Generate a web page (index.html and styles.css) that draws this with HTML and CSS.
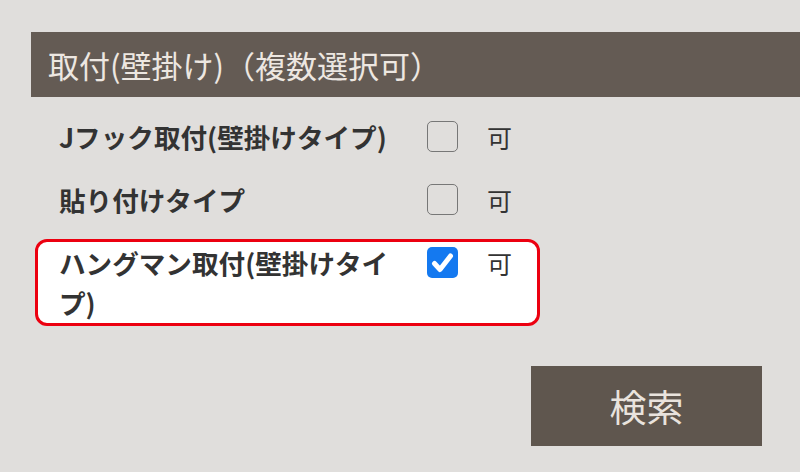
FILE: index.html
```html
<!DOCTYPE html>
<html lang="ja">
<head>
<meta charset="utf-8">
<title>取付(壁掛け)</title>
<link rel="stylesheet" href="styles.css">
</head>
<body>
<div class="panel">
  <div class="heading">取付(壁掛け)（複数選択可）</div>
  <div class="options">
    <div class="opt">
      <div class="label">Jフック取付(壁掛けタイプ)</div>
      <span class="box"></span>
      <span class="ok">可</span>
    </div>
    <div class="opt">
      <div class="label">貼り付けタイプ</div>
      <span class="box"></span>
      <span class="ok">可</span>
    </div>
    <div class="opt selected">
      <div class="label">ハングマン取付(壁掛けタイプ)</div>
      <span class="box checked"><svg viewBox="0 0 31 31" width="31" height="31"><path d="M7.5 16.5 L13 22.5 L23.5 9" fill="none" stroke="#fff" stroke-width="5" stroke-linecap="round" stroke-linejoin="round"/></svg></span>
      <span class="ok">可</span>
    </div>
  </div>
  <div class="actions">
    <button class="search" type="button">検索</button>
  </div>
</div>
</body>
</html>
```
FILE: styles.css
```css
html, body {
  margin: 0;
  padding: 0;
}
body {
  background: #e0dedc;
  font-family: "Noto Sans CJK JP", "Noto Sans", sans-serif;
  color: #333;
  width: 800px;
  height: 472px;
  overflow: hidden;
}
.panel {
  padding: 32px 0 0 31px;
}
.heading {
  height: 65px;
  background: #645b54;
  color: #ede7e1;
  font-size: 31px;
  line-height: 65px;
  padding-left: 17px;
  white-space: nowrap;
}
.options {
  margin: 16px 0 0 4px;
  width: 505px;
  display: flex;
  flex-direction: column;
  gap: 16px;
}
.opt {
  display: flex;
  align-items: flex-start;
  padding: 1px 22px 0 21px;
  border: 3px solid transparent;
  border-radius: 12px;
}
.opt.selected {
  border-color: #ec0010;
  background: #fff;
}
.label {
  width: 346px;
  margin-right: 22px;
  font-size: 26.6px;
  font-weight: 700;
  line-height: 40px;
  color: #333;
}
.box {
  flex: none;
  width: 31px;
  height: 31px;
  box-sizing: border-box;
  border: 1.5px solid #777;
  border-radius: 5px;
  margin-top: 4px;
  display: flex;
}
.box.checked {
  border: none;
  background: #1479f0;
}
.ok {
  margin-left: 29px;
  font-size: 25px;
  line-height: 40px;
  color: #333;
}
.actions {
  display: flex;
  justify-content: flex-end;
  padding-right: 38px;
  margin-top: 40px;
}
.search {
  width: 231px;
  height: 80px;
  border: none;
  background: #5f564e;
  color: #e9e3dd;
  font-family: "Noto Sans CJK JP", "Noto Sans", sans-serif;
  font-size: 37px;
  padding: 0;
}
```
